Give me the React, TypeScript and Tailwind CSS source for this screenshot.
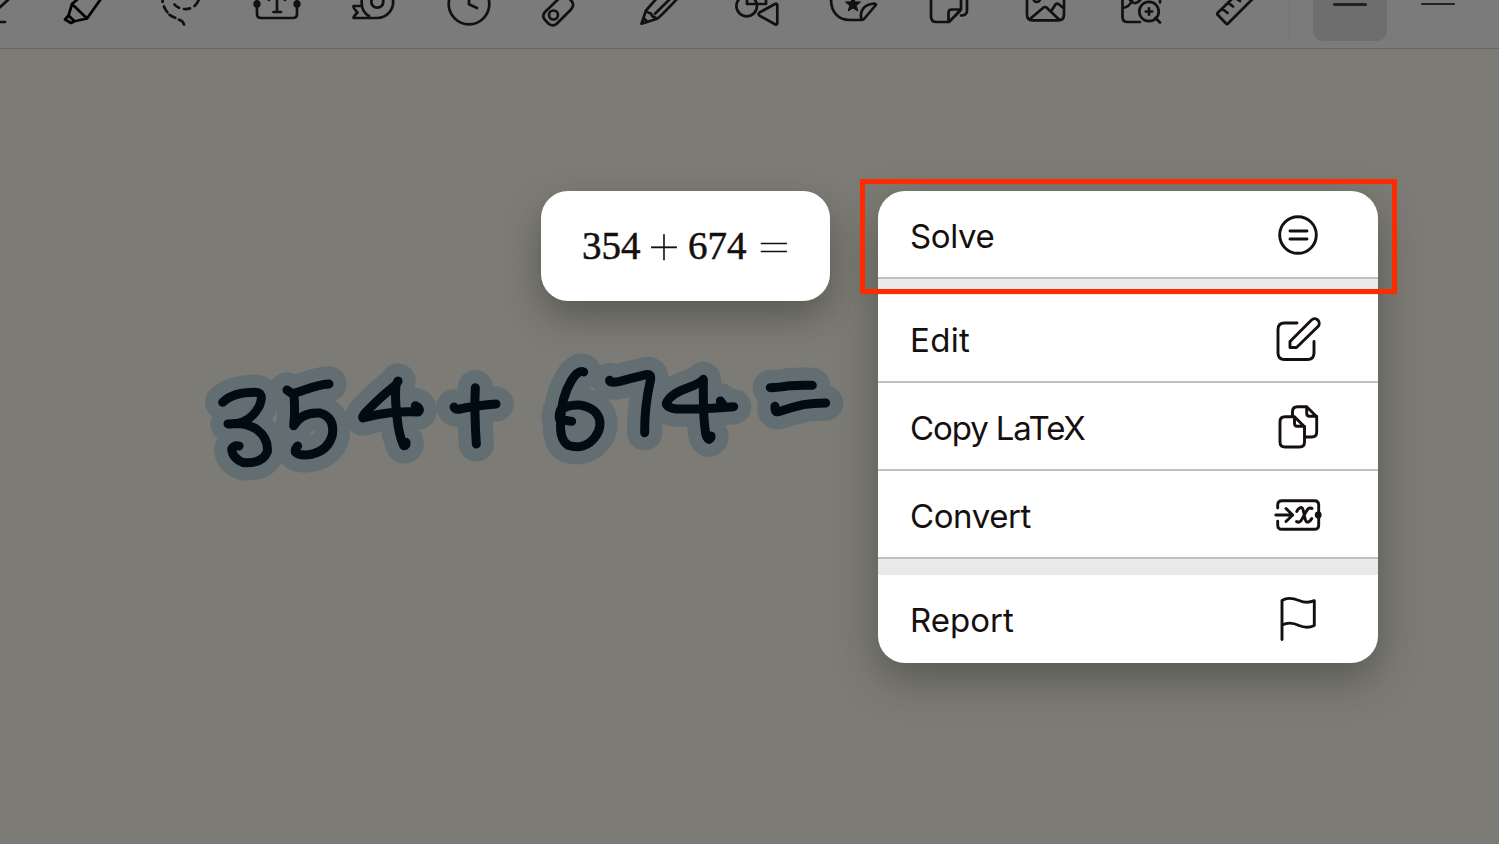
import type { ReactNode } from "react";

const TOOL_WIDTH = 96;
const TOOLBAR_START = -60;

/* Toolbar drawings share one coordinate space; each cell shows its own slice. */
const tools: { name: string; art: ReactNode }[] = [
  { name: "pen", art: <path d="M9-1L-1 8M-4 22H5" /> },
  {
    name: "highlighter",
    art: <path d="M79-2L72 4L87 18.5L101.500-2M72 4L68.500 15.500L65 19.500L71 23L74.500 21.300L87 18.500M68.500 15.500L74.500 21.300" stroke="#000" />,
  },
  {
    name: "lasso",
    art: (
      <path d="M162.600-1v3M164 6.500q1.300 3.500 3.300 5.700M169.500 14.800q2.500 2 5.800 3M179 19.700q4 1 5 4.800M174.500 4.500q1.800 2.300 4.500 3.200M184 9q3 .4 6-.6M194.500 6q3-2.500 4.500-7" />
    ),
  },
  {
    name: "text",
    art: (
      <>
        <path d="M257-2V14q0 4 4 4H293q4 0 4-4V-2M277-3V12M273.500 12H281M269-2V0M285-2V0" />
        <circle cx="257" cy="4" r="2.300" fill="#111" />
        <circle cx="297" cy="4" r="2.300" fill="#111" />
      </>
    ),
  },
  {
    name: "tape",
    art: (
      <>
        <circle cx="377.300" cy="1.700" r="6" />
        <path d="M377 18A16 16 0 0 0 393 0M362-2Q360 11 369 16M377 18H353.500Q353 17 357.500 12.500Q353 8 353.500 6H361" />
      </>
    ),
  },
  {
    name: "clock",
    art: (
      <>
        <circle cx="469" cy="4" r="20.300" />
        <path d="M469-4V4.300L477 8" />
      </>
    ),
  },
  {
    name: "eraser",
    art: (
      <>
        <path d="M560-2.500L545 12Q541.500 16 545 20L549 24Q553 27 557 23.500L571 9.500Q575 5 571.500 1L568-3" />
        <circle cx="553.500" cy="15" r="4.500" />
      </>
    ),
  },
  {
    name: "pencil",
    art: <path d="M657-2L646 10.500L641.500 23.700L657 18.700Q659 18 677-1M646 10.500Q648 13 651 13.500Q652 17 655 17.500L657 18.700M655 13.800L670-1M643.500 18L647 21.500" />,
  },
  {
    name: "shapes",
    art: (
      <>
        <circle cx="746.700" cy="6" r="10.300" />
        <path d="M747-2V4H766V-2M759.500 12.500L775 4Q777.300 3 777.300 5.500V22.500Q777.300 25.500 775 24.200L759.500 15.600Q757.500 14 759.500 12.500Z" />
      </>
    ),
  },
  {
    name: "sticker",
    art: (
      <>
        <path d="M831-1C831 12 838 20 850 20H861Q863 20 864 19L875 6Q877 4 874.500 3.500C865 4 859 10 861.500 19.500" />
        <path d="M853-3.500L855 1.800L860.500 2L856.300 5.500L857.800 11L853 8L848.200 11L849.700 5.500L845.500 2L851 1.800Z" fill="#111" strokeWidth="1" />
      </>
    ),
  },
  {
    name: "page",
    art: <path d="M931-1V16.500Q931 22 936.500 22H949L961 9.500V-2M948.500 21V12.500Q948.500 9.500 952 9.500H961M950 21L960 11M967-2V10.500Q967 15.500 961 15.500" />,
  },
  {
    name: "image",
    art: (
      <>
        <path d="M1027-2V14.500Q1027 20.300 1032.500 20.300H1058.500Q1064 20.300 1064 14.500V-2M1030 19L1043.500 7.500Q1045 6.500 1046.500 7.500L1059 19.500M1051.500 10.500L1055.500 4.500Q1057 3 1058.500 4L1064 8.500" />
        <circle cx="1036.800" cy="-1.300" r="3.300" />
      </>
    ),
  },
  {
    name: "image search",
    art: (
      <>
        <path d="M1122.500-2V17Q1122.500 22 1127.500 22H1140M1123 8Q1129 7 1132 1M1128-3Q1134 8 1141-1M1160-1V2.500M1155.500 18L1160 22.500M1149 8.300V14.700M1145.800 11.500H1152.200" />
        <circle cx="1149" cy="11.500" r="9.700" />
      </>
    ),
  },
  {
    name: "ruler",
    art: <path d="M1233-2L1217.500 13Q1217 14 1217.500 14.500L1226 23.500Q1227 24.500 1228 23.500L1252.500-1M1222 8.500L1227.500 13M1228 2.500L1233 6.500M1234-3L1240 1" />,
  },
];

function Toolbar() {
  return (
    <header className="flex h-[49px] w-full overflow-hidden border-b border-[#666666] bg-[#7b7b7b]">
      <div className="-ml-[60px] flex shrink-0">
        {tools.map((tool, i) => (
          <svg
            key={tool.name}
            className="h-12 w-24 shrink-0"
            viewBox={`${TOOLBAR_START + i * TOOL_WIDTH} 0 96 48`}
            fill="none"
            stroke="#111"
            strokeWidth="2.700"
            strokeLinecap="round"
            strokeLinejoin="round"
          >
            {tool.art}
          </svg>
        ))}
      </div>
      <div className="ml-[5px] h-10 w-px shrink-0 bg-[#727272]" />
      <div className="ml-[23px] flex h-[41px] w-[74px] shrink-0 justify-center rounded-b-[10px] bg-[#6e6e6e] pt-[3px]">
        <div className="h-[2.500px] w-[34px] rounded-full bg-[#222]" />
      </div>
      <div className="ml-[34px] mt-[3px] h-[2px] w-[34px] shrink-0 rounded-full bg-[#222]" />
    </header>
  );
}

const leftStrokes = [
  "M98 187Q128 157 195 157Q225 157 208 198Q190 232 160 245Q135 254 114 252Q165 245 200 268Q236 295 232 335Q218 372 160 368Q127 355 125 327Q133 314 147 318",
  "M417 132Q390 133 345 149Q315 160 305 160L291 150M312 165Q316 215 311 257Q335 215 390 219Q435 232 427 285Q415 330 368 342Q330 350 316 336Q314 328 323 318",
  "M624 123L618 134Q570 172 540 204Q514 228 519 234Q560 222 600 218Q650 214 685 216Q694 205 676 197M618 134Q614 175 621 230Q626 285 641 317Q650 318 648 307",
  "M856 143Q854 180 855 220Q856 270 859 312M792 201Q796 210 810 207Q850 198 918 192",
];

const rightStrokes = [
  "M161 96Q145 88 125 120Q92 175 92 245Q88 300 115 316Q150 328 180 307Q215 277 209 240Q200 205 155 196Q115 192 91 211Q85 230 89 238L125 244",
  "M239 121Q238 130 270 124Q315 112 348 104Q364 100 362 118Q343 200 344 278",
  "M520 118Q510 130 470 145Q420 163 409 190Q410 203 440 207Q520 208 611 200M571 183L582 198M520 118Q519 220 525 265Q527 295 537 298Q544 294 543 288",
  "M721 143Q745 143 780 137Q810 135 847 136",
  "M735 199Q733 218 745 215Q785 202 820 194Q850 189 887 189",
];

function Handwriting() {
  const ink = (
    <>
      {leftStrokes.map((d) => (
        <path key={d} d={d} />
      ))}
      <g transform="translate(1020 0)">
        {rightStrokes.map((d) => (
          <path key={d} d={d} />
        ))}
      </g>
    </>
  );
  return (
    <svg
      className="absolute left-[190px] top-[340px] h-[150px] w-[680px]"
      viewBox="0 0 2040 450"
      fill="none"
      strokeLinecap="round"
      strokeLinejoin="round"
    >
      <g stroke="#636e72" strokeWidth="106">{ink}</g>
      <g stroke="#000b13" strokeWidth="27">{ink}</g>
    </svg>
  );
}

type Item = { label: string; tracking: string; divider: string; icon: ReactNode };

const items: Item[] = [
  {
    label: "Solve",
    tracking: "tracking-[-0.4px]",
    divider: "section",
    icon: (
      <>
        <circle cx="24" cy="24" r="18.300" />
        <path d="M16 20H33M16 28H33" />
      </>
    ),
  },
  {
    label: "Edit",
    tracking: "tracking-[0.3px]",
    divider: "line",
    icon: (
      <path d="M23 8H10.500Q4 8 4 14.500V38Q4 44.500 10.500 44.500H33.500Q40 44.500 40 38V26.500M16 32.500V26.500L37.500 5A4.600 4.600 0 0 1 44 11.500L22.500 32.500Z" />
    ),
  },
  {
    label: "Copy LaTeX",
    tracking: "tracking-[-1.1px]",
    divider: "line",
    icon: (
      <path d="M20.500 13.700H11Q6 13.700 6 18.700V39Q6 44 11 44H25.500Q30.500 44 30.500 39V23.700ZV20.500Q20.500 23.200 23.200 23.200H30.500M18.500 12V8.700Q18.500 3.700 23.500 3.700H32.700L42.700 13.700V29Q42.700 34 37.700 34H31.500M32.700 3.700V10.500Q32.700 13.200 35.400 13.200H42.700" />
    ),
  },
  {
    label: "Convert",
    tracking: "tracking-[-0.4px]",
    divider: "section",
    icon: (
      <>
        <path d="M3.700 17V14Q3.700 9.700 8 9.700H40.400Q44.700 9.700 44.700 14V34Q44.700 38.300 40.400 38.300H8Q3.700 38.300 3.700 34V30.300M1.800 24H18.500M12 17.500L18.700 24L12 30.500" />
        <path d="M22.800 20.500C24 17.500 27.800 14.500 29 18.500L31.300 28.500C32.300 33 36 31 37.800 27.500M38 17.500C35 15.500 33 18.500 30.500 23.500C28 28.500 26 33 22.500 30.500" />
        <circle cx="44.200" cy="24" r="2" fill="#15100f" />
      </>
    ),
  },
  {
    label: "Report",
    tracking: "tracking-[0px]",
    divider: "none",
    icon: (
      <path d="M8 44.500V5.500C14 1.500 20 3.500 25 5.500C31 8 35 8 40.300 5.700V30.500C35 33 31 33 25 30.500C20 28 14 27 8 30" />
    ),
  },
];

function Menu() {
  return (
    <nav className="absolute left-[878px] top-[191px] flex w-[500px] flex-col overflow-hidden rounded-[27px] bg-white shadow-[0_16px_44px_rgba(20,30,15,0.36)]">
      {items.map((item) => (
        <div key={item.label} className="flex flex-col">
          <button
            className={`flex h-[88px] items-center justify-between border-b-2 pl-8 pr-14 ${item.divider === "none" ? "border-transparent" : "border-[#c0c0c0]"}`}
          >
            <span className={`pt-[3px] text-[33px] leading-10 text-[#15100f] ${item.tracking}`}>{item.label}</span>
            <svg
              className="mt-[2px] h-12 w-12"
              viewBox="0 0 48 48"
              fill="none"
              stroke="#15100f"
              strokeWidth="2.900"
              strokeLinecap="round"
              strokeLinejoin="round"
            >
              {item.icon}
            </svg>
          </button>
          {item.divider === "section" && <div className="h-4 bg-[#e9e9e9]" />}
        </div>
      ))}
    </nav>
  );
}

function FormulaCard() {
  return (
    <div className="absolute left-[541px] top-[191px] flex h-[110px] w-[289px] items-center rounded-[27px] bg-white pl-[41px] font-['Liberation_Serif',serif] text-[39px] leading-none text-[#15100f] shadow-[0_16px_36px_rgba(20,30,15,0.34)]">
      <span className="mb-[2px] w-[59px] [-webkit-text-stroke:0.5px_#15100f]">354</span>
      <span className="mb-[6px] flex w-[46px] justify-center font-['Inter',sans-serif] text-[62px] font-thin [-webkit-text-stroke:0.4px_#15100f]">+</span>
      <span className="mb-[2px] w-[61px] pl-[1px] [-webkit-text-stroke:0.5px_#15100f]">674</span>
      <span className="mb-[4px] flex w-[52px] scale-x-[1.34] scale-y-[0.74] justify-center font-['Inter',sans-serif] text-[56px] font-thin [-webkit-text-stroke:0.6px_#15100f]">=</span>
    </div>
  );
}

export default function App() {
  return (
    <main className="relative h-[844px] w-[1499px] overflow-hidden bg-[#7d7b75] font-['Inter',sans-serif]">
      <Toolbar />
      <Handwriting />
      <FormulaCard />
      <Menu />
      <div className="pointer-events-none absolute left-[860px] top-[179px] h-[115px] w-[537px] border-[5px] border-[#ff2a00]" />
    </main>
  );
}
